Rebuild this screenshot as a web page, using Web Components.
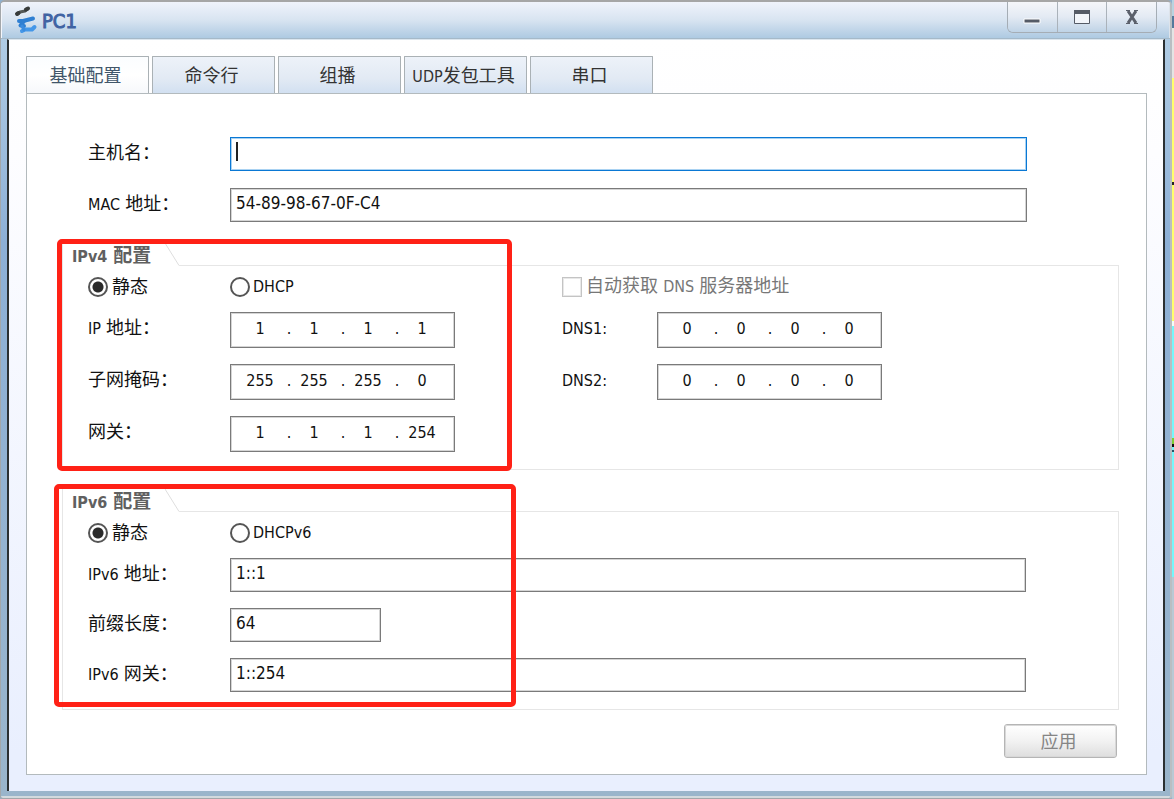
<!DOCTYPE html>
<html lang="zh-CN">
<head>
<meta charset="utf-8">
<title>PC1</title>
<style>
html, body { margin: 0; min-height: 100%; }
body {
  font-family: "DejaVu Sans Condensed", "Noto Sans CJK SC", sans-serif;
  font-size: 16px;
  color: #111;
}
</style>
</head>
<body>
<app-desktop>
  <app-window heading="PC1">
    <tab-panel tabs="基础配置,命令行,组播,UDP发包工具,串口">
      <text-row class="wide" label="主机名：" focused></text-row>
      <text-row class="wide" label="MAC 地址：" value="54-89-98-67-0F-C4"></text-row>
      <group-box heading="IPv4 配置" slot="groups" mark="v4">
        <radio-pair first="静态" second="DHCP"></radio-pair>
        <check-option label="自动获取 DNS 服务器地址"></check-option>
        <ip-row label="IP 地址：" value="1.1.1.1"></ip-row>
        <ip-row class="dns" label="DNS1:" value="0.0.0.0"></ip-row>
        <ip-row label="子网掩码：" value="255.255.255.0"></ip-row>
        <ip-row class="dns" label="DNS2:" value="0.0.0.0"></ip-row>
        <ip-row label="网关：" value="1.1.1.254"></ip-row>
      </group-box>
      <group-box heading="IPv6 配置" slot="groups" mark="v6">
        <radio-pair first="静态" second="DHCPv6"></radio-pair>
        <text-row label="IPv6 地址：" value="1::1"></text-row>
        <text-row label="前缀长度：" value="64" short></text-row>
        <text-row label="IPv6 网关：" value="1::254"></text-row>
      </group-box>
      <push-button slot="actions">应用</push-button>
    </tab-panel>
  </app-window>
</app-desktop>

<script>
/* Latin runs are set smaller than the Chinese text beside them. */
const mix = t => t.replace(/[\x21-\x7e]+/g, '<span class="latin">$&</span>');

const base = `
  * { box-sizing: border-box; }
  .cjk { font-size: 18px; white-space: nowrap; }
  .latin { font-size: 16px; }
  label { cursor: default; }
  input { font-family: inherit; color: inherit; }
`;

class Base extends HTMLElement {
  connectedCallback() {
    if (this.shadowRoot) return;
    this.attachShadow({ mode: 'open' }).innerHTML = `<style>${base}${this.css()}</style>${this.html()}`;
  }
  at(n) { return this.getAttribute(n) || ''; }
}

customElements.define('app-desktop', class extends Base {
  css() { return `
    :host { display: grid; grid-template-columns: minmax(0, 1fr) 2px; min-height: 100vh; background: #8fb0cf; }
    .behind { background: linear-gradient(#b9d3e0 0 16px, #54799c 16px 28px, #e4e4e4 28px 78px,
      #ffff6b 78px 182px, #222 182px 185px, #ffff6b 185px 321px, #f4fff8 321px 326px,
      #75f7fb 326px 438px, #80cf35 438px 444px, #111 444px 447px, #75f7fb 447px 450px, #256 450px 452px,
      #75f7fb 452px 577px, #b9c9d4 577px); }
  `; }
  html() { return `<slot></slot><div class="behind"></div>`; }
});

customElements.define('app-window', class extends Base {
  css() { return `
    :host { display: flex; flex-direction: column; overflow: hidden; border: 1px solid #a3a7aa; border-top: 2px solid #a6a6a6;
      border-right: 2px solid #b9bec2; border-radius: 5px 5px 3px 3px;
      background: linear-gradient(#eef1fa, #b0cce4 37px, #8db0d6 240px, #9ab5cb); }
    header { display: flex; height: 37px; align-items: flex-start; padding: 0 13px; box-shadow: inset 1px 0 #f4f6fb, inset -1px 0 #dde3ea;
      border-bottom: 1px solid #a5b9c9; background: linear-gradient(#f0f3fb, #d8e4f1 50%, #aecae2); }
    .logo { width: 24px; height: 30px; margin-top: 3px; }
    h1 { flex: 1; margin: 0 0 0 4px; font: 20px/38px "DejaVu Sans Condensed", sans-serif; color: #3f63a3; -webkit-text-stroke: 1px #3f63a3; }
    .controls { display: flex; width: 150px; height: 31px; border: 1px solid #a5adb5; border-top: 0; border-radius: 0 0 6px 6px; overflow: hidden; }
    .controls button { flex: 1; padding: 0; border: 0; border-left: 1px solid #aab2ba; background: linear-gradient(#f5f6fa, #e3eaf3 50%, #bfd3e6); }
    .controls button:first-child { border-left: 0; }
    .controls svg { display: block; margin: auto; }
    main { flex: 1; margin: 0 5px 5px 6px; border: solid #2b3032; border-width: 0 2px; border-top: 1px solid #dce6ee;
      padding: 16px 16px 16px 17px; background: linear-gradient(#fff, #fdfdff 15%, #e9effe 95%); display: flex; flex-direction: column; }
    footer { height: 2px; background: #d2dade; }
  `; }
  html() { return `
    <header>
      <svg class="logo" viewBox="0 0 24 30" fill="none" stroke-linecap="round" stroke-linejoin="round" aria-hidden="true">
        <path d="M3.5 9L6 7L11 6L14 3.5" stroke="#555957" stroke-width="3"/>
        <path d="M3 9L4.5 8M12 4.5L14 3.5" stroke="#383b3a" stroke-width="4"/>
        <path d="M5 16L9 16L19 13.5" stroke="#2f7fd2" stroke-width="4"/>
        <path d="M10 16L6.5 20.5L10 21" stroke="#2f7fd2" stroke-width="4"/>
        <path d="M8 26L11 24.5L18 24.5L20.500 22" stroke="#4497e8" stroke-width="4"/>
        <path d="M8 21L10 25" stroke="#3b8cdf" stroke-width="3"/>
      </svg>
      <h1>${this.at('heading')}</h1>
      <div class="controls">
        <button aria-label="最小化"><svg width="18" height="18"><path d="M1 11H17V15H1Z" fill="#555b66" stroke="#fff"/></svg></button>
        <button aria-label="最大化"><svg width="18" height="16"><path d="M1.5 1.5H16.5V14.5H1.5Z" fill="#f2f5fa" stroke="#555b66"/><path d="M1 1H17V5H1Z" fill="#555b66"/></svg></button>
        <button aria-label="关闭"><svg width="16" height="16"><path d="M4 2L12 14M12 2L4 14" stroke="#5b606b" stroke-width="3"/><path d="M2 1.500H6M10 1.500H14M2 14.500H6M10 14.500H14" stroke="#5b606b"/></svg></button>
      </div>
    </header>
    <main><slot></slot></main><footer></footer>`; }
});

customElements.define('tab-panel', class extends Base {
  css() { return `
    :host { display: flex; flex-direction: column; flex: 1; }
    nav { display: flex; gap: 3px; }
    nav button { width: 123px; height: 37px; padding: 2px 4px 0 0; border: 1px solid #aab1b5; border-bottom: 0; border-radius: 1px 1px 0 0;
      background: linear-gradient(#edf2f9, #e2eaf4 60%, #d2e0f1); font: 18px/26px "DejaVu Sans Condensed", "Noto Sans CJK SC", sans-serif; color: #333; white-space: nowrap; }
    nav button[aria-selected=true] { background: linear-gradient(#fbfdff, #fff 50%, #f6f8fb); color: #41566a; }
    .latin { font-size: 16px; }
    section { flex: 1; border: 1px solid #b3babd; background: #fff; padding: 43px 27px 15px 35px; }
    .top { display: grid; gap: 17px; padding: 0 92px 0 26px; margin-bottom: 21px; }
    .groups { display: grid; gap: 19px; }
    .actions { display: flex; justify-content: flex-end; margin-top: 14px; padding-right: 2px; }
  `; }
  html() {
    const tabs = this.at('tabs').split(',').map((t, i) => `<button role="tab" aria-selected="${i === 0}">${mix(t)}</button>`).join('');
    return `<nav role="tablist">${tabs}</nav>
      <section role="tabpanel"><div class="top"><slot></slot></div>
      <div class="groups"><slot name="groups"></slot></div>
      <div class="actions"><slot name="actions"></slot></div></section>`;
  }
});

customElements.define('group-box', class extends Base {
  css() { return `
    :host { display: block; position: relative; }
    header { display: flex; height: 23px; }
    h2 { margin: 0; width: 103px; padding-left: 9px; border-left: 1px solid #e6e6e6; font-size: 19px; line-height: 24px; color: #606060; white-space: nowrap; }
    header svg { display: block; }
    .line { flex: 1; border: solid #e6e6e6; border-width: 0 0 1px; }
    .body { display: grid; gap: 16px 0; padding: 10px 92px 17px 25px; border: 1px solid #e6e6e6; border-top: 0; }
    :host([mark=v4]) .body { grid-template-columns: 367px 320px; column-gap: 107px; }
    .mark { position: absolute; border: 5px solid #ff2116; border-radius: 5px; pointer-events: none; }
    :host([mark=v4]) .mark { left: -5px; top: -4px; width: 455px; bottom: -1px; }
    :host([mark=v6]) .mark { left: -8px; top: -5px; width: 462px; bottom: 3px; }
  `; }
  html() { return `
    <header><h2 id="t">${mix(this.at('heading'))}</h2>
      <svg width="14" height="23" aria-hidden="true"><path d="M0 0L14 22.5" stroke="#dedede" fill="none"/></svg>
      <div class="line"></div></header>
    <div class="body" role="group" aria-labelledby="t"><slot></slot></div>
    <div class="mark"></div>`; }
});

customElements.define('text-row', class extends Base {
  css() { return `
    :host { display: grid; grid-template-columns: 142px minmax(0, 1fr); height: 34px; }
    label { line-height: 32px; }
    input { width: 100%; height: 34px; margin: 0; padding: 0 5px 4px; border: 1px solid #7a7a7a; outline: 1px solid #d5d5d5; outline-offset: -2px; background: #fff; font-size: 17px; }
    :host([short]) input { width: 151px; }
    :host([focused]) input { border-color: #0a78d4; outline-color: #a9d2f2;
      background: linear-gradient(#222, #222) 5px 4px / 2px 19px no-repeat #fff; }
  `; }
  html() { return `<label class="cjk" for="f">${mix(this.at('label'))}</label><input id="f" type="text" value="${this.at('value')}">`; }
});

customElements.define('ip-row', class extends Base {
  css() { return `
    :host { display: grid; grid-template-columns: 142px 225px; height: 36px; }
    :host(.dns) { grid-template-columns: 95px 225px; }
    label { line-height: 32px; }
    .box { display: flex; align-items: center; padding: 0 0 4px 9px; border: 1px solid #7a7a7a; box-shadow: inset 0 0 0 1px #d5d5d5; background: #fff; }
    input { width: 40px; height: 24px; padding: 0; border: 0; outline: 0; background: transparent; text-align: center; font-size: 16px; }
    .dot { width: 14px; text-align: center; padding-left: 4px; }
  `; }
  html() {
    const cells = this.at('value').split('.').map((v, i) =>
      (i ? '<span class="dot">.</span>' : '') + `<input ${i ? `aria-label="${i + 1}"` : 'id="f"'} type="text" maxlength="3" value="${v}">`).join('');
    return `<label class="cjk" for="f">${mix(this.at('label'))}</label><div class="box">${cells}</div>`;
  }
});

customElements.define('radio-pair', class extends Base {
  css() { return `
    :host { display: grid; grid-template-columns: 142px auto; height: 20px; }
    label { display: flex; align-items: center; gap: 4px; line-height: 20px; }
    input { appearance: none; width: 20px; height: 20px; margin: 0; border: 2px solid #555; border-radius: 50%; background: #fff; }
    input:checked { background: radial-gradient(circle, #2a2a2a 0 5px, #fff 6px); }
    label + label { gap: 3px; }
  `; }
  html() { return `<label class="cjk"><input type="radio" name="m" checked><span>${mix(this.at('first'))}</span></label>
    <label class="cjk"><input type="radio" name="m"><span>${mix(this.at('second'))}</span></label>`; }
});

customElements.define('check-option', class extends Base {
  css() { return `
    :host { display: block; height: 20px; color: #777; }
    label { display: flex; align-items: center; gap: 4px; line-height: 20px; }
    input { appearance: none; width: 20px; height: 20px; margin: 0; border: 1px solid #c4c4c4; outline: 1px solid #e8e8e8; outline-offset: -2px; background: #fff; }
  `; }
  html() { return `<label class="cjk"><input type="checkbox" disabled><span>${mix(this.at('label'))}</span></label>`; }
});

customElements.define('push-button', class extends Base {
  css() { return `
    :host { display: block; }
    button { display: block; width: 113px; height: 34px; padding: 0 4px 2px 0; border: 1px solid #b5b5b5; outline: 1px solid #d8d8d8; outline-offset: -2px; border-radius: 3px;
      background: linear-gradient(#fff, #f2f2f2 50%, #dedede); color: #858585; font: 18px/26px "Noto Sans CJK SC", sans-serif; }
  `; }
  html() { return `<button type="button"><slot></slot></button>`; }
});
</script>
</body>
</html>
